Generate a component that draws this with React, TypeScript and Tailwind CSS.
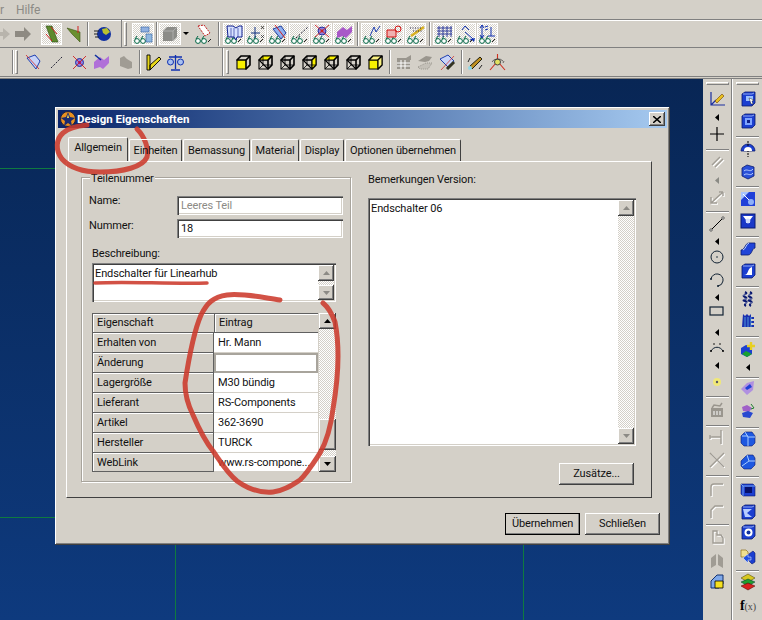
import type { ReactNode } from "react";

const raised =
  "bg-[#d4d0c8] shadow-[inset_-1px_-1px_0_#404040,inset_1px_1px_0_#ffffff,inset_-2px_-2px_0_#808080]";
const sunken =
  "bg-white shadow-[inset_1px_1px_0_#808080,inset_2px_2px_0_#404040,inset_-1px_-1px_0_#ffffff,inset_-2px_-2px_0_#d4d0c8]";
const dither =
  "bg-[repeating-conic-gradient(#ffffff_0_25%,#d4d0c8_0_50%)] bg-[length:2px_2px]";

function S({ w = 16, h = 16, vb, children }: { w?: number; h?: number; vb?: string; children: ReactNode }) {
  return (
    <svg width={w} height={h} viewBox={vb ?? `0 0 ${w} ${h}`} className="block shrink-0">
      {children}
    </svg>
  );
}

function Glasses() {
  return (
    <g fill="#fff" stroke="#064" strokeWidth="1">
      <circle cx="4" cy="17" r="2.4" />
      <circle cx="10" cy="17" r="2.4" />
      <path d="M2 15l2-3M8 15l2-3" fill="none" />
      <path d="M14 18l3-3" stroke="#222" fill="none" />
    </g>
  );
}

function Pressed({ children, w = 21 }: { children: ReactNode; w?: number }) {
  return (
    <div
      className={`${dither} flex h-[22px] shrink-0 items-center justify-center shadow-[inset_1px_1px_0_#ffffff,inset_-1px_-1px_0_#ffffff]`}
      style={{ width: w }}
    >
      <S w={20} h={20}>
        {children}
      </S>
    </div>
  );
}

function Sep({ className = "" }: { className?: string }) {
  return <div className={`h-[24px] w-[2px] shrink-0 border-l border-r border-l-[#808080] border-r-white ${className}`} />;
}

function Gripper({ className = "" }: { className?: string }) {
  return <div className={`h-[24px] w-[3px] shrink-0 border border-t-white border-l-white border-r-[#808080] border-b-[#808080] ${className}`} />;
}

function Cube({ front = "none", top = "none", side = "none", back = false }: { front?: string; top?: string; side?: string; back?: boolean }) {
  return (
    <S w={15} h={15}>
      <g stroke="#000" strokeWidth="1.1" strokeLinejoin="round">
        <path d="M1 5l4-4h9v9l-4 4z" fill="none" />
        <path d="M1 5h9v9H1z" fill={front} />
        <path d="M1 5l4-4h9l-4 4z" fill={top} />
        <path d="M10 5l4-4v9l-4 4z" fill={side} />
        {back && <path d="M5 1v9h9M5 10l-4 4" fill="none" strokeWidth="0.8" />}
      </g>
    </S>
  );
}

function GrayBlock({ d }: { d: string }) {
  return (
    <S>
      <path d={d} fill="none" stroke="#fff" strokeWidth="1.4" transform="translate(1 1)" />
      <path d={d} fill="none" stroke="#a09c94" strokeWidth="1.4" />
    </S>
  );
}

function Blue({ children }: { children?: ReactNode }) {
  return (
    <S>
      <path d="M2 3l3-2h10v11l-3 3H2z" fill="#1c3fd0" stroke="#0a1a70" strokeWidth="0.8" />
      <path d="M3 3h9l2-1" fill="none" stroke="#8fa8f0" strokeWidth="1" />
      {children}
    </S>
  );
}

function Arrow() {
  return (
    <svg width="4" height="7" viewBox="0 0 4 7" className="block">
      <path d="M4 0v7L0 3.5z" fill="#000" />
    </svg>
  );
}

function GrayArrow() {
  return (
    <svg width="4" height="7" viewBox="0 0 4 7" className="block">
      <path d="M4 0v7L0 3.5z" fill="#8a8a84" />
    </svg>
  );
}

function Hr() {
  return <div className="h-[2px] w-[23px] border-t border-b border-t-[#808080] border-b-white" />;
}

function HGrip() {
  return <div className="h-[3px] w-[23px] border border-t-white border-l-white border-r-[#808080] border-b-[#808080]" />;
}

const col1: [number, ReactNode][] = [
  [83, <HGrip />],
  [92, <S><path d="M2 1v13h14M2 14l5-5" fill="none" stroke="#1a2fa0" strokeWidth="1.2" /><path d="M6 10l7-7 2 2-7 7z" fill="#e8c020" stroke="#704000" strokeWidth="0.6" /></S>],
  [115, <Arrow />],
  [127, <S><path d="M8 1v14M1 8h14" stroke="#000" strokeWidth="1.2" /></S>],
  [150, <Hr />],
  [155, <GrayBlock d="M3 11l8-8M6 13l8-8" />],
  [178, <GrayArrow />],
  [190, <GrayBlock d="M2 8v6h6M2 14L14 3M14 3h-4M14 3v4" />],
  [212, <Hr />],
  [217, <S><path d="M2 14L14 2" stroke="#000" strokeWidth="1" /><circle cx="2" cy="14" r="1.2" fill="#fff" stroke="#000" strokeWidth="0.6" /><circle cx="14" cy="2" r="1.2" fill="#fff" stroke="#000" strokeWidth="0.6" /></S>],
  [239, <Arrow />],
  [250, <S><circle cx="8" cy="8" r="6" fill="none" stroke="#123" strokeWidth="1" /><circle cx="8" cy="8" r="0.8" fill="#123" /></S>],
  [273, <S><path d="M2 7a6 6 0 0 1 12 2 6 6 0 0 1-5 5" fill="none" stroke="#123" strokeWidth="1" /><circle cx="2" cy="7" r="1" fill="#123" /><circle cx="9" cy="14" r="1" fill="#123" /></S>],
  [295, <Arrow />],
  [306, <S h={12}><rect x="1" y="2" width="13" height="8" fill="none" stroke="#123" strokeWidth="1.2" /></S>],
  [330, <Arrow />],
  [343, <S h={12}><path d="M2 9c3-5 9-5 12 0" fill="none" stroke="#123" strokeWidth="1" /><circle cx="2" cy="9" r="1" fill="#000" /><circle cx="14" cy="9" r="1" fill="#000" /><circle cx="5" cy="2" r="0.8" fill="#000" /><circle cx="11" cy="2" r="0.8" fill="#000" /></S>],
  [363, <Arrow />],
  [375, <S><circle cx="8" cy="8" r="4" fill="#f0e878" /><circle cx="8" cy="8" r="1.2" fill="#556" /></S>],
  [397, <Hr />],
  [403, <S><path d="M2 6h12v9H2z" fill="#9a968e" /><path d="M3 6l2-3 6 1 2-3" fill="none" stroke="#9a968e" strokeWidth="1.5" /><path d="M4 10h8M4 12h8" stroke="#fff" strokeWidth="1" strokeDasharray="2 1" /></S>],
  [426, <Hr />],
  [430, <GrayBlock d="M1 8h11M12 1v14M1 6v4" />],
  [453, <GrayBlock d="M1 1l14 14M15 1L1 15" />],
  [476, <Hr />],
  [482, <GrayBlock d="M2 15V6q0-3 3-3h9" />],
  [504, <GrayBlock d="M2 15V7l4-4h8" />],
  [525, <Hr />],
  [530, <GrayBlock d="M4 2h4v4h4l2 3v5H4z" />],
  [554, <S><path d="M2 15V5l5-4v11zM14 15V5L9 1v11z" fill="#a09c94" /></S>],
  [575, <S><path d="M4 5l4-4h6v9l-4 4H2V7z" fill="#7fa8e8" stroke="#123070" strokeWidth="1" /><path d="M6 7h8v7H6z" fill="#f5e020" stroke="#000" strokeWidth="0.8" /></S>],
];

const col2: [number, ReactNode][] = [
  [83, <HGrip />],
  [92, <Blue><path d="M6 5h7v5H6z" fill="#9cc0ff" /><path d="M9 7l5 2-2 1 1 3-2 0-1-3z" fill="#fff" stroke="#000" strokeWidth="0.4" /></Blue>],
  [114, <Blue><rect x="5" y="5" width="7" height="7" fill="#7fa4ff" /><rect x="7" y="7" width="3" height="3" fill="#10208a" /></Blue>],
  [137, <Hr />],
  [142, <S><path d="M1 10a7 7 0 0 1 14 0z" fill="#1c3fd0" stroke="#0a1a70" strokeWidth="0.8" /><path d="M8 0v16" stroke="#000" strokeDasharray="2 1" /><path d="M4 10a4 4 0 0 1 8 0z" fill="#fff" /></S>],
  [165, <S><path d="M2 4l5-3 7 2v9l-6 3-6-3z" fill="#2a50d8" stroke="#0a1a70" strokeWidth="0.8" /><path d="M4 7c3-3 6 2 9-2M4 11c3-3 6 2 9-2" stroke="#b8ccff" fill="none" /></S>],
  [187, <Hr />],
  [192, <S><rect x="1" y="1" width="14" height="14" fill="#2040d8" /><path d="M1 1h8L1 9z" fill="#a8c4ff" /><path d="M3 3l8 8" stroke="#fff" /><circle cx="11" cy="11" r="3" fill="#8fb0f8" /></S>],
  [214, <S><rect x="1" y="1" width="14" height="14" fill="#1a38c8" stroke="#0a1a70" /><path d="M3 3l10 0-3 4v3H6V7z" fill="#fff" /><circle cx="8" cy="8" r="2.4" fill="#d0ddff" /></S>],
  [237, <Hr />],
  [242, <S><path d="M1 9c4 0 4-7 8-7h6v5c-3 0-3 7-7 7H1z" fill="#2044d8" stroke="#0a1a70" strokeWidth="0.8" /><path d="M9 2c-3 1-3 6-6 7" stroke="#bcd0ff" fill="none" /></S>],
  [264, <Blue><path d="M4 12c5 0 3-7 8-8v8z" fill="#fff" /></Blue>],
  [287, <Hr />],
  [292, <S><path d="M5 1c5 2-5 3 0 5s-5 3 0 4-3 3 1 5M10 1c5 2-5 3 0 5s-5 3 0 4-3 3 1 5" fill="none" stroke="#0a1a70" strokeWidth="2" /><path d="M3 4h9M3 8h9M3 12h9" stroke="#fff" strokeWidth="0.6" /></S>],
  [314, <S><path d="M3 1l2 2 2-2 2 2 2-2v3h3v2h-3v2h3v2h-3v2h3v2H2z" fill="#1a30b0" /><path d="M5 4v10M8 4v10M11 4v10" stroke="#8ff" strokeWidth="0.5" /></S>],
  [337, <Hr />],
  [343, <S><path d="M1 6l5-3 6 2v7l-5 3-6-3z" fill="#1c3fd0" /><path d="M2 12l4-3 6 3-5 3z" fill="#18a030" /><path d="M11 0v8M7 4h8" stroke="#e8d020" strokeWidth="2.4" /></S>],
  [365, <Arrow />],
  [378, <Hr />],
  [381, <S><path d="M1 9l6-6 7-2-1 9-6 5z" fill="#b090e0" /><path d="M5 8l5-4 2 3-5 3z" fill="#2040d8" /></S>],
  [404, <S><path d="M2 4l5-2 5 3-3 4-6-1z" fill="#a060c8" /><path d="M2 10l6-2 5 2-3 5-7-1z" fill="#2848d0" /><path d="M11 1l3 4-3 1" stroke="#208030" fill="none" /></S>],
  [428, <Hr />],
  [432, <S><path d="M1 5l4-4h7l3 4v7l-3 3H4l-3-3z" fill="#1e58e0" stroke="#0a1a70" strokeWidth="0.6" /><path d="M5 1l3 5h7M8 6v9M2 5h6" stroke="#a8ccff" fill="none" /></S>],
  [455, <S><path d="M1 7l6-6h6l2 3v7l-4 4H4l-3-3z" fill="#1e58e0" stroke="#0a1a70" strokeWidth="0.6" /><path d="M7 1l2 6h6M9 7l-7 5" stroke="#a8ccff" fill="none" /></S>],
  [477, <Hr />],
  [482, <S><path d="M1 3h12l2 2v10H3l-2-2z" fill="#1c3fd0" stroke="#0a1a70" strokeWidth="0.6" /><rect x="5" y="6" width="7" height="6" fill="#06106a" /><path d="M1 3l2 2v10M3 5h12" stroke="#9cf" fill="none" strokeWidth="0.7" /></S>],
  [505, <Blue><path d="M3 5h9l-5 4 5 4H5z" fill="#b8ccff" /></Blue>],
  [525, <Blue><circle cx="8.5" cy="8.5" r="4" fill="#fff" /><circle cx="8.5" cy="8.5" r="2" fill="#1030a0" /></Blue>],
  [550, <S><path d="M1 1h5l2 2v5H1z" fill="#f0e090" stroke="#806000" strokeWidth="0.6" /><path d="M5 8l8-6 2 2v9l-3 2z" fill="#1c3fd0" stroke="#0a1a70" strokeWidth="0.6" /><path d="M3 9l5-4v3h3v3H8v3z" fill="#2050e0" stroke="#fff" strokeWidth="0.5" /></S>],
  [571, <Hr />],
  [574, <S h={18}><path d="M1 5l7-4 7 4-7 4z" fill="#d8c820" stroke="#403800" strokeWidth="0.5" /><path d="M1 9l7-3 7 3-7 4z" fill="#20a030" stroke="#033" strokeWidth="0.5" /><path d="M1 13l7-3 7 3-7 4z" fill="#d82020" stroke="#400" strokeWidth="0.5" /></S>],
  [600, <div className="pl-[1px] font-['Liberation_Serif',serif] text-[12px] leading-[14px] text-black"><b className="text-[14px]">f</b><span className="text-[10px] text-[#444]">(x)</span></div>],
];

function ToolColumn({ items, className = "" }: { items: [number, ReactNode][]; className?: string }) {
  return (
    <div className={`flex flex-col items-center ${className}`}>
      {items.map(([top, node], i) => (
        <div
          key={top}
          className="flex shrink-0 items-start justify-center"
          style={{ height: (items[i + 1]?.[0] ?? 620) - top, marginTop: i === 0 ? top - 80 : 0 }}
        >
          {node}
        </div>
      ))}
    </div>
  );
}

function TopToolbars() {
  return (
    <div className="h-[79px] shrink-0 border-b border-b-[#808080] bg-[#d4d0c8]">
      <div className="flex h-[19px] items-center text-[12px] text-[#8c8a85]">
        <span>r</span>
        <span className="ml-[12px]">Hilfe</span>
      </div>
      {/* row 1 */}
      <div className="flex h-[29px] items-center border-t border-b border-t-[#808080] border-b-[#808080] shadow-[inset_0_1px_0_#fff]">
        <div className="flex h-full w-[122px] shrink-0 items-center border-r border-r-[#808080]">
          <S w={11} h={14}>
            <path d="M-6 5h9V1l7 6-7 6V9h-9z" fill="#b8b4ac" />
          </S>
          <div className="ml-[4px]">
            <S w={17} h={14}>
              <path d="M0 4h9V0l7 7-7 7v-4H0z" fill="#8e8a82" />
            </S>
          </div>
          <div className="ml-[9px]">
            <Pressed>
              <path d="M4 2l6 0 6 16-6 0z" fill="#5d8a2e" stroke="#2c4a10" strokeWidth="0.6" />
              <path d="M9 3l6 7M4 10l6 7" stroke="#d02020" strokeWidth="1" />
            </Pressed>
          </div>
          <div className="ml-[4px]">
            <S w={15} h={20}>
              <path d="M1 4l13 4v10L6 10z" fill="#6a9030" stroke="#3a5010" strokeWidth="0.6" />
              <path d="M12 2v7" stroke="#d02020" />
            </S>
          </div>
          <Sep className="ml-[6px]" />
          <div className="ml-[5px]">
            <S w={18} h={18}>
              <circle cx="10" cy="9" r="7" fill="#1030a0" />
              <path d="M8 4l5-1 3 4-4 3-3-2z" fill="#b8c030" />
              <path d="M0 6h5M0 9h4M1 12h4" stroke="#222" />
            </S>
          </div>
        </div>
        <Gripper className="ml-[2px]" />
        <div className="ml-[5px]">
          <Pressed w={22}>
            <Glasses />
            <rect x="8" y="3" width="8" height="5" fill="#90b0e0" stroke="#3060a0" strokeWidth="0.6" />
            <rect x="13" y="10" width="6" height="8" fill="#90b8e0" stroke="#3060a0" strokeWidth="0.6" />
          </Pressed>
        </div>
        <Sep className="ml-[2px]" />
        <div className="ml-[1px]">
          <Pressed w={22}>
            <path d="M3 7l4-4h10v10l-4 4H3z" fill="#8c8c88" />
            <path d="M3 7h10v10M13 7l4-4" stroke="#bbb" fill="none" strokeWidth="0.7" />
          </Pressed>
        </div>
        <svg width="6" height="3" viewBox="0 0 6 3" className="ml-[2px] block">
          <path d="M0 0h6L3 3z" fill="#000" />
        </svg>
        <div className="ml-[5px]">
          <S w={20} h={22}>
            <g transform="translate(0 1)">
              <Glasses />
            </g>
            <path d="M4 3l6-1 6 8-5 3z" fill="#fff" stroke="#c02020" strokeDasharray="2 1" />
          </S>
        </div>
        <Sep className="ml-[4px]" />
        <div className="ml-[3px] flex gap-[1px]">
          <Pressed>
            <Glasses />
            <path d="M3 2h6l3 2 3-2h3v11h-5l-1 3-2-3H4z" fill="#d8e2ff" stroke="#102090" strokeWidth="1" />
            <path d="M10 4v9M7 4v9M14 4v9" stroke="#102090" strokeWidth="0.6" />
          </Pressed>
          <Pressed>
            <Glasses />
            <path d="M9 3v11M5 9h9" stroke="#103080" />
            <path d="M15 2l3 3M18 2l-3 3M15 11l3 3M18 11l-3 3" stroke="#222" strokeWidth="0.7" />
          </Pressed>
          <Pressed>
            <Glasses />
            <path d="M5 5l8-3 5 7-5 6z" fill="#90b0f0" stroke="#2040a0" />
            <path d="M7 1l10 13" stroke="#d02020" />
          </Pressed>
          <Pressed>
            <Glasses />
            <path d="M6 14L18 3" stroke="#223" strokeDasharray="2 1.4" />
          </Pressed>
          <Pressed>
            <Glasses />
            <circle cx="10" cy="7" r="4" fill="#9080e0" stroke="#2030a0" />
            <circle cx="10" cy="7" r="1.4" fill="#c02020" />
            <path d="M3 1l14 12M17 1L3 13" stroke="#d02020" strokeWidth="0.9" />
          </Pressed>
          <Pressed>
            <Glasses />
            <path d="M3 8l6-5 4 3 5-4v6l-6 6-3-2-6 2z" fill="#a858c8" />
          </Pressed>
        </div>
        <Sep className="ml-[3px]" />
        <div className="ml-[2px] flex gap-[1px]">
          <Pressed>
            <Glasses />
            <path d="M8 12l4-9 2 5 4-6" stroke="#2040b0" fill="none" />
          </Pressed>
          <Pressed>
            <Glasses />
            <path d="M3 6h9v7H3z" fill="#f0b0b0" stroke="#d01010" />
            <circle cx="14" cy="5" r="3" fill="none" stroke="#d01010" />
          </Pressed>
          <Pressed>
            <Glasses />
            <path d="M5 12L18 3" stroke="#d8b020" strokeWidth="2.5" />
            <path d="M4 4h11M7 7h10" stroke="#224" strokeDasharray="1 1.5" />
          </Pressed>
        </div>
        <Sep className="ml-[3px]" />
        <div className="ml-[2px] flex gap-[1px]">
          <Pressed>
            <Glasses />
            <path d="M5 2v11M9 2v11M13 2v11M17 2v11M3 4h15M3 7h15M3 10h15" stroke="#102090" strokeWidth="0.8" />
          </Pressed>
          <Pressed>
            <Glasses />
            <path d="M9 2l-3 4M9 2l4 4M9 8l8 7M14 16l3-1" stroke="#1030b0" fill="none" />
            <path d="M15 15l4-1-1 4z" fill="#1030b0" />
          </Pressed>
          <Pressed>
            <Glasses />
            <path d="M4 1v13M2 4l2-3 2 3M2 11l2 3 2-3M13 3v9M10 12h7" stroke="#1030b0" fill="none" />
            <path d="M7 3l3-1M7 6l3-1" stroke="#1030b0" />
          </Pressed>
        </div>
      </div>
      {/* row 2 */}
      <div className="flex h-[29px] items-center border-b border-b-[#808080]">
        <Sep className="ml-[12px]" />
        <Gripper className="ml-[1px]" />
        <div className="ml-[7px]">
          <S w={18} h={18}>
            <path d="M2 5l8-3 5 6-4 8z" fill="#c8d4f8" stroke="#2040b0" />
            <path d="M1 2l13 14" stroke="#d02020" strokeWidth="0.8" />
          </S>
        </div>
        <div className="ml-[7px]">
          <S w={14} h={14}>
            <path d="M1 13L13 1" stroke="#223" strokeDasharray="2 1.4" />
          </S>
        </div>
        <div className="ml-[8px]">
          <S w={15} h={15}>
            <circle cx="7.5" cy="7.5" r="4" fill="#9080e0" stroke="#2030a0" />
            <circle cx="7.5" cy="7.5" r="1.4" fill="#901090" />
            <path d="M1 1l13 13M14 1L1 14" stroke="#d02020" strokeWidth="0.9" />
          </S>
        </div>
        <div className="ml-[6px]">
          <S w={18} h={18}>
            <path d="M1 9l6-5 4 3 5-4v7l-6 6-3-2-6 2z" fill="#b070d8" />
            <path d="M2 2l6 5" stroke="#1030a0" strokeWidth="1.6" />
          </S>
        </div>
        <div className="ml-[8px]">
          <S w={14} h={15}>
            <path d="M1 3l4-2 3 3 5 3v6l-4 1-8-3z" fill="#a09c94" />
          </S>
        </div>
        <Sep className="ml-[6px]" />
        <div className="ml-[5px]">
          <S w={16} h={17}>
            <path d="M1 1h3v15H1zM4 16L15 5l-2-2L4 11z" fill="#e8d818" stroke="#000" strokeWidth="0.9" />
          </S>
        </div>
        <div className="ml-[5px]">
          <S w={17} h={17}>
            <path d="M8.5 1v14M4 16h9M2 3h13" stroke="#1030b0" strokeWidth="1.3" />
            <circle cx="3.5" cy="8" r="3" fill="#a8c0f0" stroke="#1030b0" />
            <circle cx="13.5" cy="8" r="3" fill="#a8c0f0" stroke="#1030b0" />
          </S>
        </div>
        <div className="ml-[38px] h-[28px] w-[2px] shrink-0 border-l border-r border-l-[#808080] border-r-white" />
        <Gripper className="ml-[2px]" />
        <div className="ml-[7px] flex gap-[7px]">
          <Cube front="#f8f000" />
          <Cube top="#f8f000" back />
          <Cube back />
          <Cube side="#f8f000" back />
          <Cube back top="#f8f000" />
          <Cube back />
          <Cube front="#f8f000" top="#f8f080" side="#f8f080" />
        </div>
        <Sep className="ml-[6px]" />
        <div className="ml-[5px]">
          <S w={16} h={16}>
            <path d="M1 4l9 0 5-3v5h-1v9H1z" fill="#9a968e" />
            <path d="M1 9h13M1 12h13M5 6v9M9 6v9" stroke="#fff" />
          </S>
        </div>
        <div className="ml-[5px]">
          <S w={16} h={16}>
            <path d="M1 7l8-5 6 1-3 4-4 1z" fill="#9a968e" />
            <path d="M1 13l8-4 6 0-4 6H3z" fill="#c4c0b8" stroke="#9a968e" strokeDasharray="1 1" />
          </S>
        </div>
        <div className="ml-[6px]">
          <S w={17} h={17}>
            <path d="M1 5l8-4 6 6-5 7z" fill="#c8d4f8" stroke="#2040b0" />
            <path d="M2 16L15 2" stroke="#d02020" strokeWidth="0.7" />
            <path d="M8 15l7-7" stroke="#332" strokeWidth="3" />
          </S>
        </div>
        <Sep className="ml-[5px]" />
        <div className="ml-[4px]">
          <S w={16} h={17}>
            <path d="M3 12L13 3l2 2-10 10z" fill="#c09020" stroke="#221" />
            <path d="M1 8l2-4M15 11l-3 4" stroke="#222" />
            <circle cx="3" cy="14" r="2" fill="#90d8e8" />
          </S>
        </div>
        <div className="ml-[6px]">
          <S w={17} h={17}>
            <path d="M8.5 0v7M7 9L1 16M10 9l6 7" stroke="#d03020" strokeWidth="1.1" />
            <circle cx="8.5" cy="8" r="3" fill="#e0e060" stroke="#444" />
            <path d="M3 8a6 4 0 0 1 11-1M14 9l1-2" stroke="#333" fill="none" strokeWidth="0.7" />
          </S>
        </div>
      </div>
    </div>
  );
}

function ScrollBtn({ dir, dark = false, h = 16 }: { dir: "up" | "down"; dark?: boolean; h?: number }) {
  const color = dark ? "#000" : "#8c8a85";
  return (
    <div className={`${raised} flex w-full shrink-0 items-center justify-center`} style={{ height: h }}>
      <svg width="7" height="4" viewBox="0 0 7 4" className="block">
        <path d={dir === "up" ? "M3.5 0L7 4H0z" : "M0 0h7L3.5 4z"} fill={color} />
      </svg>
    </div>
  );
}

function Button({ label, def = false }: { label: string; def?: boolean }) {
  return (
    <div
      className={`${raised} flex h-[22px] w-[75px] items-center justify-center ${def ? "outline outline-1 -outline-offset-1 outline-black" : ""}`}
    >
      {label}
    </div>
  );
}

const rows: [string, string][] = [
  ["Erhalten von", "Hr. Mann"],
  ["Änderung", ""],
  ["Lagergröße", "M30 bündig"],
  ["Lieferant", "RS-Components"],
  ["Artikel", "362-3690"],
  ["Hersteller", "TURCK"],
  ["WebLink", "www.rs-compone..."],
];

const tabs = [
  { label: "Einheiten", w: "w-[53px]" },
  { label: "Bemassung", w: "w-[67px]" },
  { label: "Material", w: "w-[48px]" },
  { label: "Display", w: "w-[44px]" },
  { label: "Optionen übernehmen", w: "w-[116px]" },
];

function Dialog() {
  return (
    <div className={`absolute left-[55px] top-[107px] flex h-[438px] w-[615px] flex-col p-[3px] ${raised}`}>
      <div className="flex h-[18px] shrink-0 items-center bg-linear-to-r from-[#0a246a] to-[#a6caf0] pl-[2px] pr-[2px]">
        <S w={16} h={16}>
          <circle cx="8" cy="8" r="7.5" fill="#e89020" stroke="#202040" strokeWidth="1" />
          <path d="M8 1l2 5 5 1-4 3 1 5-4-3-4 3 1-5-4-3 5-1z" fill="#1a2a70" />
          <path d="M8 3l1 4h-2z" fill="#f8e060" />
        </S>
        <span className="ml-[1px] text-[11.5px] font-bold tracking-normal text-white">Design Eigenschaften</span>
        <div className={`${raised} ml-auto flex h-[14px] w-[16px] items-center justify-center`}>
          <svg width="8" height="7" viewBox="0 0 8 7" className="block">
            <path d="M0 0l8 7M8 0L0 7" stroke="#000" strokeWidth="1.5" />
          </svg>
        </div>
      </div>
      {/* tabs */}
      <div className="relative z-10 ml-[10px] mt-[9px] flex h-[24px] shrink-0 items-end">
        <div className="flex h-[24px] w-[60px] justify-center rounded-t-[2px] border-t border-l border-r border-t-white border-l-white border-r-[#404040] bg-[#d4d0c8] pt-[3px] pb-[1px]">
          Allgemein
        </div>
        {tabs.map((t) => (
          <div
            key={t.label}
            className={`ml-[1px] flex h-[22px] ${t.w} justify-center rounded-t-[2px] border-t border-l border-r border-t-white border-l-white border-r-[#404040] pt-[4px]`}
          >
            {t.label}
          </div>
        ))}
      </div>
      {/* tab page */}
      <div className="ml-[8px] flex h-[337px] w-[586px] shrink-0 border border-t-white border-l-white border-r-[#404040] border-b-[#404040] pl-[14px] pt-[15px]">
        <div className="relative h-[305px] w-[270px] shrink-0 border border-[#a8a49c] pl-[7px] pt-[18px] shadow-[inset_1px_1px_0_#fff,1px_1px_0_#fff]">
          <span className="absolute left-[8px] top-[-6px] bg-[#d4d0c8] px-[1px] leading-[14px]">Teilenummer</span>
          <div className="flex h-[23px] items-start">
            <span className="mt-[-2px] w-[88px] shrink-0">Name:</span>
            <div className={`${sunken} h-[19px] w-[166px] pl-[4px] pt-[3px] text-[#8c8a85]`}>Leeres Teil</div>
          </div>
          <div className="flex h-[23px] items-start">
            <span className="w-[88px] shrink-0">Nummer:</span>
            <div className={`${sunken} h-[19px] w-[166px] pl-[4px] pt-[3px]`}>18</div>
          </div>
          <div className="ml-[3px] mt-[5px] h-[16px] leading-[14px]">Beschreibung:</div>
          <div className={`${sunken} ml-[3px] flex h-[39px] w-[244px] p-[2px]`}>
            <div className="flex-1 pl-[1px] pt-[1px] leading-[15px]">Endschalter für Linearhub</div>
            <div className="flex w-[16px] flex-col">
              <ScrollBtn dir="up" />
              <div className={`flex-1 ${dither}`} />
              <ScrollBtn dir="down" h={15} />
            </div>
          </div>
          <div className="ml-[3px] mt-[11px] flex h-[159px] w-[244px]">
            <div className="w-[226px] shrink-0 bg-white shadow-[inset_1px_1px_0_#808080]">
              <div className="flex h-[20px] border-t border-l border-[#606060] bg-[#d4d0c8]">
                <div className="w-[122px] border-r border-b border-[#606060] pl-[4px] pt-[2px] shadow-[inset_1px_1px_0_#fff]">Eigenschaft</div>
                <div className="flex-1 border-b border-[#606060] pl-[4px] pt-[2px] shadow-[inset_1px_1px_0_#fff]">Eintrag</div>
              </div>
              {rows.map(([k, v], i) => (
                <div key={k} className="flex h-[20px] last:h-[19px]">
                  <div className="w-[122px] shrink-0 border-r border-b border-l border-[#606060] bg-[#d4d0c8] pl-[4px] pt-[3px] shadow-[inset_1px_1px_0_#fff]">{k}</div>
                  <div
                    className={
                      i === 1
                        ? "flex-1 border-2 border-[#a8a49c] bg-white"
                        : "min-w-0 flex-1 overflow-hidden border-b border-[#d4d0c8] pl-[4px] pt-[3px]"
                    }
                  >
                    {v}
                  </div>
                </div>
              ))}
            </div>
            <div className="ml-[1px] flex w-[17px] flex-col">
              <ScrollBtn dir="up" dark />
              <div className={`h-[90px] ${dither}`} />
              <div className={`${raised} h-[31px]`} />
              <div className={`h-[6px] ${dither}`} />
              <ScrollBtn dir="down" dark />
            </div>
          </div>
        </div>
        <div className="ml-[17px] flex flex-col">
          <div className="mt-[-4px] h-[25px] leading-[14px]">Bemerkungen Version:</div>
          <div className={`${sunken} flex h-[248px] w-[268px] p-[2px]`}>
            <div className="flex-1 pl-[1px] pt-[1px] leading-[15px]">Endschalter 06</div>
            <div className="flex w-[16px] flex-col">
              <ScrollBtn dir="up" />
              <div className={`flex-1 ${dither}`} />
              <ScrollBtn dir="down" />
            </div>
          </div>
          <div className="ml-[191px] mt-[17px]">
            <Button label="Zusätze..." />
          </div>
        </div>
      </div>
      <div className="mr-[7px] mt-[15px] flex justify-end gap-[5px]">
        <Button label="Übernehmen" def />
        <Button label="Schließen" />
      </div>
    </div>
  );
}

function RedMarks() {
  return (
    <svg width="762" height="620" viewBox="0 0 762 620" className="pointer-events-none absolute left-0 top-0 blur-[0.4px]">
      <g fill="none" stroke="#cc3a2c" strokeWidth="5" strokeLinecap="round" strokeLinejoin="round" opacity="0.88">
        <path d="M137 129c8 8 12 20 10 28-4 10-24 15-47 15-14 0-28-2-38-13-7-9-6-20 1-26 4-4 14-7 24-8" />
        <path d="M95 283c30-2 70 1 112 0" strokeWidth="3.5" />
        <path d="M280 300c-20-3-38-7-53-5-14 2-20 8-26 20-7 16-12 42-16 68 0 12 3 22 8 32 6 14 12 26 20 36 7 10 14 22 24 30 11 8 24 12 36 11 10-1 18-6 27-12 8-8 14-18 20-27 8-14 11-28 13-44 3-18 5-36 5-53 0-14-1-24-3-34-3-8-7-15-12-19" />
      </g>
    </svg>
  );
}

export default function App() {
  return (
    <div className="relative flex h-[620px] w-[762px] flex-col overflow-hidden whitespace-nowrap bg-[#d4d0c8] font-['Roboto',Arial,sans-serif] text-[11px] leading-[14px] tracking-[-0.12px] text-[#111]">
      <TopToolbars />
      <div className="flex min-h-0 flex-1">
        <div className="relative w-[703px] shrink-0 bg-linear-to-b from-[#082655] to-[#0e3a7e]">
          <div className="absolute left-0 top-[89px] h-px w-[55px] bg-[#0f7a40]" />
          <div className="absolute left-0 top-[438px] h-px w-[55px] bg-[#0f7a40]" />
          <div className="absolute left-[175px] top-[466px] h-[75px] w-px bg-[#0f7a40]" />
          <div className="absolute left-[523px] top-[466px] h-[75px] w-px bg-[#0f7a40]" />
        </div>
        <ToolColumn items={col1} className="w-[29px] shrink-0 border-r border-r-[#808080]" />
        <ToolColumn items={col2} className="w-[30px] shrink-0 border-l border-l-white" />
      </div>
      <Dialog />
      <RedMarks />
    </div>
  );
}
